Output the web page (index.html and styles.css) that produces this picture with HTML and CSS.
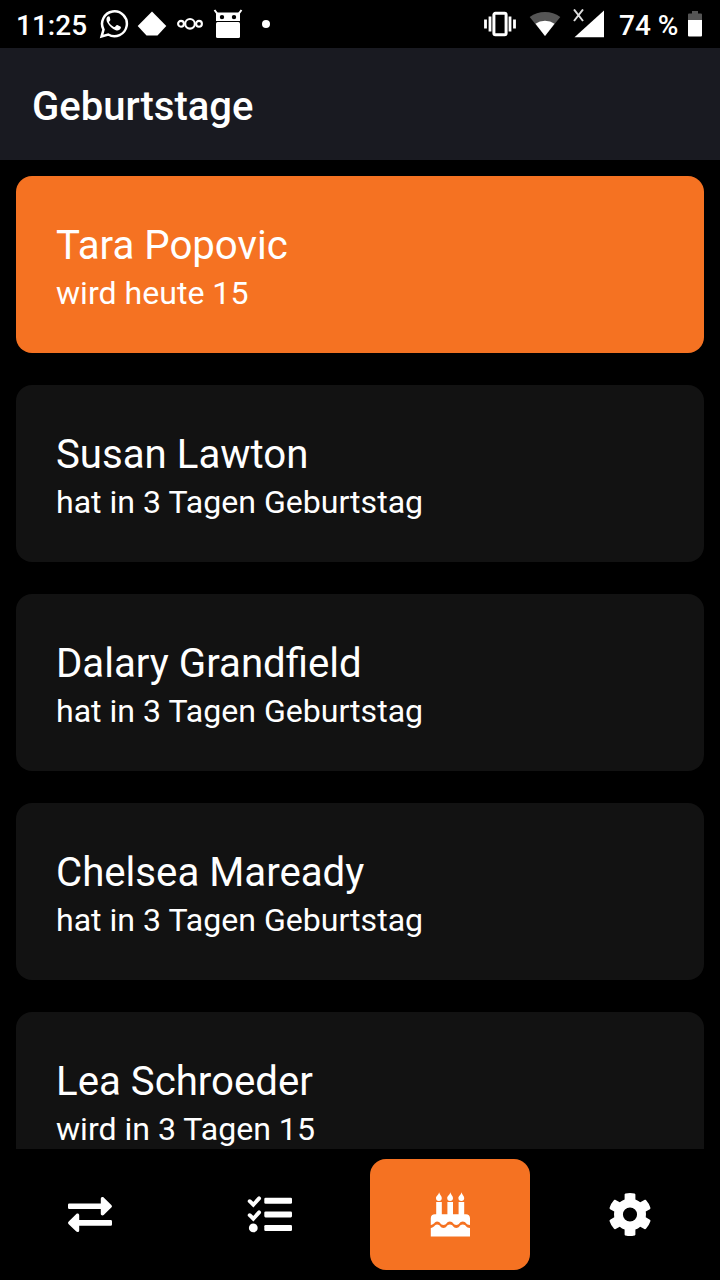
FILE: index.html
```html
<!DOCTYPE html>
<html lang="de">
<head>
<meta charset="utf-8">
<title>Geburtstage</title>
<link rel="stylesheet" href="styles.css">
</head>
<body>
<div class="app">
  <div class="status">
    <div class="status-left">
      <span class="clock">11:25</span>
      <svg class="ic-chat" width="30" height="30" viewBox="0 0 30 30"><path d="M2.600 27.400 4.500 20.600A12.400 12.400 0 1 1 9.200 25.500Z" fill="none" stroke="#fff" stroke-width="2.500"/><path d="M10.700 7.800c-.5-.9-1.600-.7-2.300 0-1.600 1.700-1 4.200.2 6.300 1.900 3.200 4.500 5.800 8.200 7.100 1.900.7 4.500-.1 5-2.100.3-1 .1-1.400-.5-1.700l-2.900-1.400c-.6-.3-.9 0-1.200.4l-1.100 1.400c-.4.4-.7.3-1.200.1-2.100-.9-3.700-2.300-4.800-4.300-.3-.5-.1-.8.2-1.100.6-.7 1.300-1.300 1-2Z" fill="#fff"/></svg>
      <svg class="ic-gem" width="30" height="26" viewBox="0 0 30 26"><path d="M15 .5 29.300 15 20.500 24.500H9.500L.7 15Z" fill="#fff"/></svg>
      <svg class="ic-cloud" width="26" height="14" viewBox="0 0 26 14"><g fill="none" stroke="#fff" stroke-width="2.100"><circle cx="13" cy="6.800" r="4.800"/><circle cx="4" cy="6.800" r="2.900"/><circle cx="22" cy="6.800" r="2.900"/></g></svg>
      <svg class="ic-robot" width="30" height="30" viewBox="0 0 30 30"><path d="M1.500 1 4.500 5M28.500 1l-3 4" stroke="#fff" stroke-width="2"/><path fill="#fff" fill-rule="evenodd" d="M4.500 3.500h21a1.500 1.500 0 0 1 1.500 1.500v7H3V5a1.500 1.500 0 0 1 1.500-1.500ZM9 5.900a2.200 2.200 0 1 0 0 4.400 2.200 2.200 0 0 0 0-4.400Zm12 0a2.200 2.200 0 1 0 0 4.400 2.200 2.200 0 0 0 0-4.400Z"/><rect x="3" y="13" width="24" height="16" rx="1.500" fill="#fff"/></svg>
      <span class="dot"></span>
    </div>
    <div class="status-right">
      <svg class="ic-vibrate" width="34" height="26" viewBox="0 0 34 26"><rect x="10.900" y="2.300" width="12.200" height="21.400" rx="1.500" fill="none" stroke="#fff" stroke-width="3"/><path d="M2.500 8.500v9M7 5.500v15M27 5.500v15M31.500 8.500v9" stroke="#fff" stroke-width="2.800"/></svg>
      <svg class="ic-wifi" width="32" height="26" viewBox="0 0 32 26"><path d="M16 25 .7 6Q7.500 1 16 1t15.300 5Z" fill="#555"/><path d="M16 25 6.500 12.700Q10.500 9.800 16 9.800t9.500 2.900Z" fill="#fff"/></svg>
      <svg class="ic-signal" width="32" height="30" viewBox="0 0 32 30"><path d="M31 1.500v26.800H1.500Z" fill="#fff"/><path d="m1 .5 9 11.500M10 .5 1 12" stroke="#ddd" stroke-width="2"/></svg>
      <span class="percent">74 %</span>
      <svg class="ic-battery" width="14" height="26" viewBox="0 0 14 26"><path d="M0 9V3.500Q0 2.500 1 2.500h3V0h6v2.500h3q1 0 1 1V9Z" fill="#555"/><path d="M0 9h14v15.500q0 1-1 1H1q-1 0-1-1Z" fill="#fff"/></svg>
    </div>
  </div>
  <header class="header"><h1 class="title">Geburtstage</h1></header>
  <main class="list">
    <article class="card card-today"><h2 class="name">Tara Popovic</h2><p class="info">wird heute 15</p></article>
    <article class="card"><h2 class="name">Susan Lawton</h2><p class="info">hat in 3 Tagen Geburtstag</p></article>
    <article class="card"><h2 class="name">Dalary Grandfield</h2><p class="info">hat in 3 Tagen Geburtstag</p></article>
    <article class="card"><h2 class="name">Chelsea Maready</h2><p class="info">hat in 3 Tagen Geburtstag</p></article>
    <article class="card"><h2 class="name">Lea Schroeder</h2><p class="info">wird in 3 Tagen 15</p></article>
  </main>
  <nav class="tabs">
    <a class="tab"><svg width="48" height="48" viewBox="0 .8 48 48" fill="#fff"><path d="M3.300 13.300h31.500V8.500c0-1.600 1.800-2.200 2.900-1.200l7.600 7.500c.9.900.9 1.700 0 2.600l-7.600 7.400c-1.100 1-2.900.4-2.900-1.200v-4.700H3.300Q2 18.900 2 17.600v-3Q2 13.300 3.300 13.300Z"/><path d="M44.700 29.900H13.200v-4.800c0-1.600-1.800-2.200-2.900-1.200l-7.600 7.500c-.9.900-.9 1.700 0 2.600l7.600 7.400c1.100 1 2.900.4 2.900-1.200v-4.700h31.500q1.300 0 1.300-1.300v-3q0-1.300-1.300-1.300Z"/></svg></a>
    <a class="tab"><svg width="48" height="48" viewBox="0 .8 48 48"><path d="m3.700 11 3.600 3.500 5.800-6.300M3.700 25l3.600 3.500 5.800-6.300" fill="none" stroke="#fff" stroke-width="3.900" stroke-linecap="round"/><g fill="#fff"><circle cx="7.300" cy="37.700" r="4.400"/><rect x="18.300" y="7.500" width="27.700" height="6" rx="1.300"/><rect x="18.300" y="21.200" width="27.700" height="6" rx="1.300"/><rect x="18.300" y="34.800" width="27.700" height="6" rx="1.300"/></g></svg></a>
    <a class="tab tab-active"><svg width="48" height="48" viewBox="-.4 .2 48 48" fill="#fff"><path d="M12.700 1.500c.4 2.400 2.700 3.600 2.700 5.800a2.900 2.900 0 0 1-5.800 0c0-2.200 2.500-2.700 3.100-5.800ZM23.900 1.500c.4 2.400 2.700 3.600 2.700 5.800a2.900 2.900 0 0 1-5.800 0c0-2.200 2.500-2.700 3.100-5.800ZM35.100 1.500c.4 2.400 2.700 3.600 2.700 5.800a2.900 2.900 0 0 1-5.800 0c0-2.200 2.500-2.700 3.100-5.800Z"/><path d="M9.800 11.300h5.600v12.200h5.600V11.300h5.600v12.200h5.600V11.300h5.600v12.200h1.700c2.500 0 4.100 1.600 4.100 4v6.800c-4 0-4-3.500-7.200-3.500-3.300 0-3.300 3.500-6.500 3.500-3.100 0-3.200-3.500-6.400-3.500s-3.300 3.500-6.400 3.500c-3.200 0-3.200-3.500-6.500-3.500-2.300 0-3 3.300-6.200 3.500v-6.800c0-2.400 1.600-4 4.100-4h1.300Z"/><path d="M4.400 37.200c3.200-.2 3.900-3.500 6.200-3.500 3.300 0 3.300 3.500 6.500 3.500 3.100 0 3.200-3.500 6.400-3.500s3.300 3.500 6.400 3.500c3.200 0 3.200-3.500 6.500-3.500 3.200 0 3.200 3.500 7.200 3.500v8.500H4.400Z"/></svg></a>
    <a class="tab"><svg width="48" height="48" viewBox="1.300 .3 45.400 45.400" fill="#fff"><path fill-rule="evenodd" d="M19.800 2.600q4.200-1 8.400 0c.7.2.9.6.9 1.200v4.500q2.500 1 4.600 2.700l3.900-2.300c.6-.3 1-.2 1.500.2q2.900 3.200 4.200 7.200c.2.600 0 1-.5 1.400l-3.900 2.200q.5 2.800 0 5.500l3.900 2.300c.5.300.7.800.5 1.400q-1.300 4-4.200 7.200c-.4.500-.9.500-1.500.2L33.700 34q-2.100 1.800-4.600 2.700v4.500c0 .7-.2 1.100-.9 1.200q-4.200 1-8.400 0c-.7-.1-.9-.5-.9-1.200v-4.500q-2.500-.9-4.600-2.700l-3.900 2.300c-.6.300-1.100.3-1.500-.2Q6 32.900 4.700 28.900c-.2-.6 0-1.100.5-1.400l3.900-2.300q-.5-2.700 0-5.500l-3.900-2.200c-.5-.4-.7-.8-.5-1.400Q6 12.100 8.900 8.900c.5-.4.900-.5 1.500-.2l3.900 2.300q2.100-1.700 4.600-2.700V3.800c0-.6.200-1 .9-1.200ZM24 15.800a6.700 6.700 0 1 0 0 13.400 6.700 6.700 0 0 0 0-13.400Z"/></svg></a>
  </nav>
</div>
</body>
</html>
```
FILE: styles.css
```css
* { box-sizing: border-box; }
body { margin: 0; background: #000; color: #fff; font-family: Roboto, sans-serif; }
svg { display: block; flex: none; }
.app { width: 720px; height: 1280px; display: flex; flex-direction: column; overflow: hidden; }
.status { height: 48px; flex: none; display: flex; justify-content: space-between; padding: 0 18px 0 16px; }
.status-left, .status-right { display: flex; align-items: center; }
.clock { width: 83px; font-size: 28px; font-weight: 500; line-height: 48px; padding-top: 3px; }
.ic-gem { margin-left: 8px; }
.ic-cloud { margin-left: 10px; }
.ic-robot { margin-left: 10px; }
.dot { width: 8px; height: 8px; border-radius: 50%; background: #fff; margin-left: 19px; }
.ic-wifi { margin-left: 12px; }
.ic-signal { margin-left: 12px; margin-bottom: 1px; }
.percent { width: 69px; margin-left: 14px; font-size: 28px; font-weight: 500; line-height: 48px; padding-top: 3px; white-space: nowrap; }
.header { height: 112px; flex: none; display: flex; align-items: center; padding: 6px 32px 0; background: #191a21; }
.title { margin: 0; font-size: 40px; font-weight: 500; line-height: 48px; }
.list { height: 989px; flex: none; display: flex; flex-direction: column; gap: 32px; padding: 16px 16px 0; overflow: hidden; }
.card { height: 177px; flex: none; padding: 44px 40px 0; border-radius: 16px; background: #121212; }
.card-today { background: #f57222; }
.name { margin: 0; font-size: 40.2px; font-weight: 400; line-height: 52px; }
.info { margin: 0; font-size: 32.1px; line-height: 42px; }
.tabs { flex: 1; display: grid; grid-template-columns: repeat(4, 1fr); padding: 10px 0; }
.tab { margin: 0 10px; display: flex; align-items: center; justify-content: center; border-radius: 16px; }
.tab-active { background: #f57222; }
```
